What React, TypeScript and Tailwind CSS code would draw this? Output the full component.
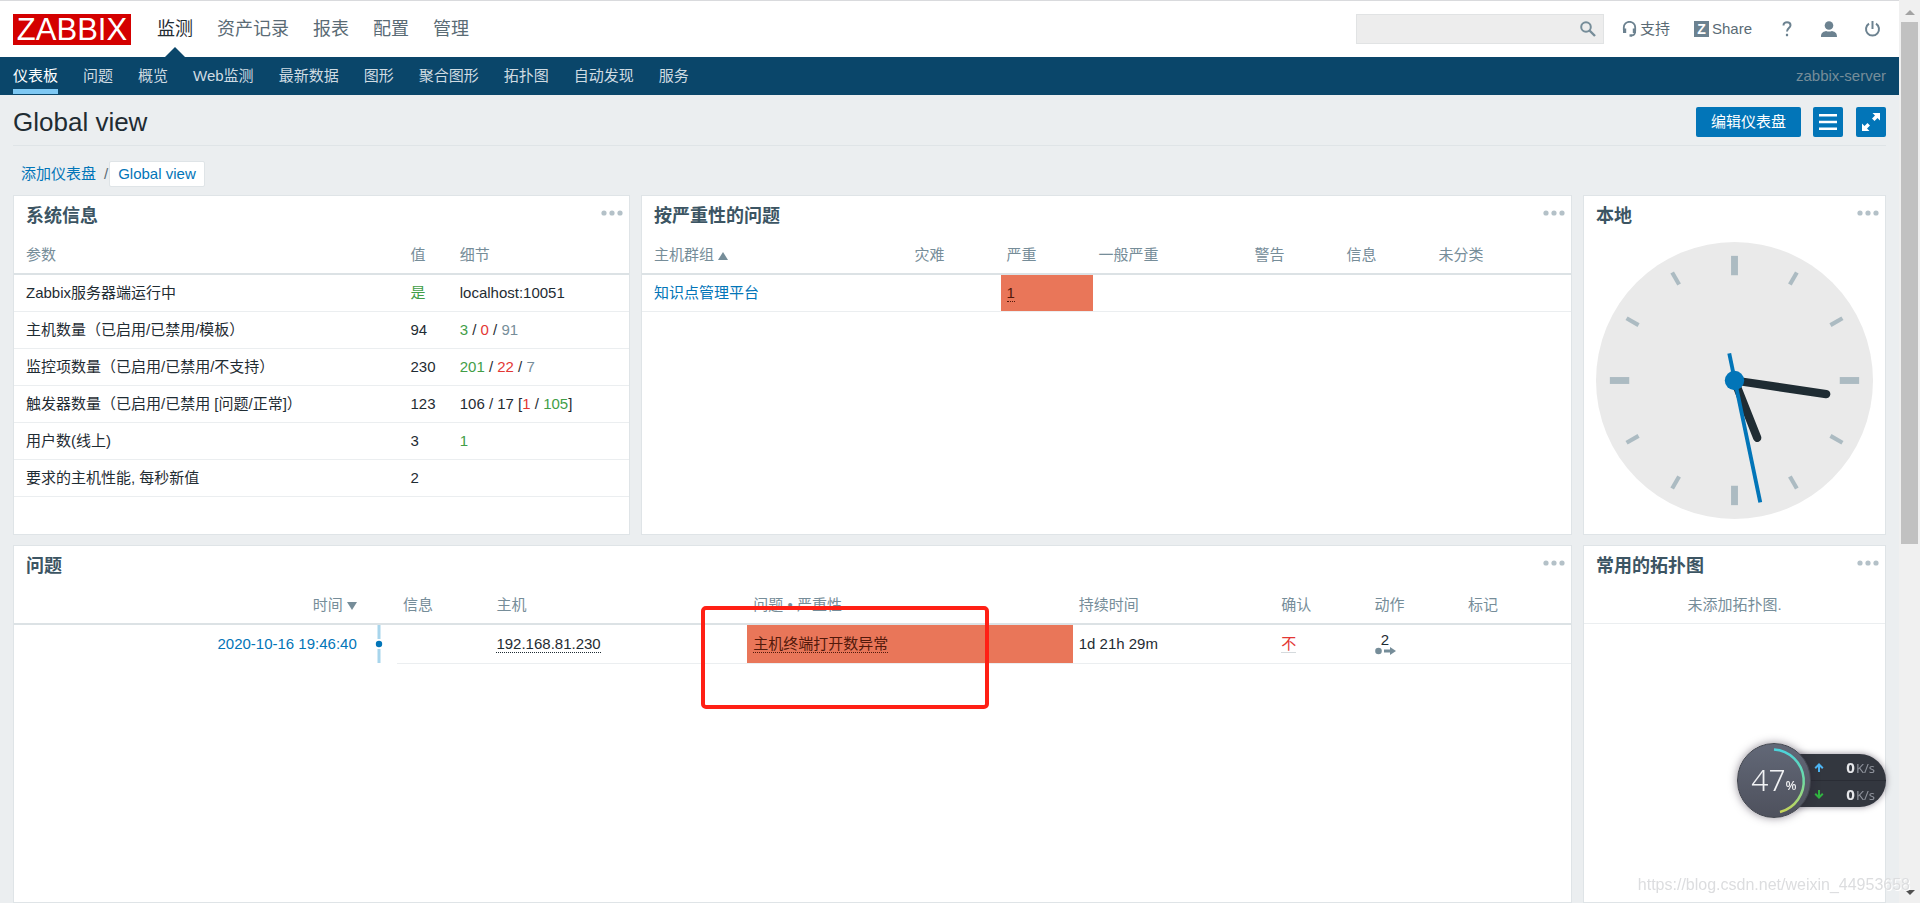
import type { ReactNode } from "react"

const mainMenu = ["监测", "资产记录", "报表", "配置", "管理"]

const subMenu = ["仪表板", "问题", "概览", "Web监测", "最新数据", "图形", "聚合图形", "拓扑图", "自动发现", "服务"]

interface SystemRow {
  name: string
  value: ReactNode
  details?: ReactNode
}

const Green = ({ children }: { children: ReactNode }) => <span className="text-[#429e47]">{children}</span>
const Red = ({ children }: { children: ReactNode }) => <span className="text-[#e33734]">{children}</span>
const Grey = ({ children }: { children: ReactNode }) => <span className="text-[#768d99]">{children}</span>

const systemRows: SystemRow[] = [
  { name: "Zabbix服务器端运行中", value: <Green>是</Green>, details: "localhost:10051" },
  {
    name: "主机数量（已启用/已禁用/模板）",
    value: "94",
    details: (
      <>
        <Green>3</Green> / <Red>0</Red> / <Grey>91</Grey>
      </>
    ),
  },
  {
    name: "监控项数量（已启用/已禁用/不支持）",
    value: "230",
    details: (
      <>
        <Green>201</Green> / <Red>22</Red> / <Grey>7</Grey>
      </>
    ),
  },
  {
    name: "触发器数量（已启用/已禁用 [问题/正常]）",
    value: "123",
    details: (
      <>
        106 / 17 [<Red>1</Red> / <Green>105</Green>]
      </>
    ),
  },
  { name: "用户数(线上)", value: "3", details: <Green>1</Green> },
  { name: "要求的主机性能, 每秒新值", value: "2" },
]

const severities = ["灾难", "严重", "一般严重", "警告", "信息", "未分类"]

function Widget({ title, className, children }: { title: string; className: string; children: ReactNode }) {
  return (
    <section className={`border border-[#dfe4e7] bg-white ${className}`}>
      <div className="flex h-10 items-center justify-between pl-3 pr-[6px]">
        <h4 className="text-[18px] font-bold leading-6 text-[#3c5563]">{title}</h4>
        <button type="button" aria-label="更多" className="pb-[6px]">
          <svg width="22" height="6" viewBox="0 0 22 6" fill="#b4c1c8">
            <circle cx="3" cy="3" r="2.6" />
            <circle cx="11" cy="3" r="2.6" />
            <circle cx="19" cy="3" r="2.6" />
          </svg>
        </button>
      </div>
      {children}
    </section>
  )
}

function Header() {
  return (
    <header>
      <div className="flex h-[57px] items-center border-t border-[#d9dadd] bg-white pl-[13px] pr-[18px]">
        <a
          href="#"
          className="flex h-[31px] w-[118px] items-center justify-center bg-[#d40000] text-[31px] leading-none text-white"
        >
          ZABBIX
        </a>
        <nav className="ml-[26px] flex h-full gap-6 text-[18px]">
          {mainMenu.map((item, i) => (
            <a
              key={item}
              href="#"
              className={`relative flex items-center ${i === 0 ? "text-[#1f2c33]" : "text-[#5a6b75]"}`}
            >
              {item}
              {i === 0 && (
                <svg className="absolute bottom-0 left-1/2 -translate-x-1/2" width="20" height="10" viewBox="0 0 20 10">
                  <path d="M0 10 10 0l10 10z" fill="#0a466a" />
                </svg>
              )}
            </a>
          ))}
        </nav>
        <div className="ml-auto flex items-center text-[#5a6b75]">
          <form className="flex h-[30px] w-[248px] items-center border border-[#e1e3e4] bg-[#ededed] pr-[7px]">
            <input type="text" aria-label="搜索" className="min-w-0 flex-1 bg-transparent px-2 outline-none" />
            <button type="button" aria-label="搜索">
              <svg width="16" height="16" viewBox="0 0 16 16" fill="none" stroke="#768d99">
                <circle cx="6" cy="6" r="4.8" strokeWidth="2" />
                <path d="m9.5 9.5 5.5 5.5" strokeWidth="2.4" />
              </svg>
            </button>
          </form>
          <a href="#" className="ml-[18px] flex items-center gap-[3px]">
            <svg width="15" height="16" viewBox="0 0 15 16" fill="none" stroke="#6c8290" strokeWidth="1.8">
              <path d="M1.800 9V6.500a5.700 5.700 0 0 1 11.400 0V10c0 2.800-1.200 4.500-3.700 4.500" />
              <path d="M2.600 7.500v4.500M12.400 7.500v4.500" strokeWidth="3.200" />
              <path d="M7.500 14.500h2.500" strokeWidth="2.400" />
            </svg>
            支持
          </a>
          <a href="#" className="ml-6 flex items-center gap-[3px]">
            <span className="flex h-[16px] w-[15px] items-center justify-center bg-[#6c8290] text-[14px] font-bold leading-none text-white">
              Z
            </span>
            Share
          </a>
          <a href="#" aria-label="帮助" className="ml-[30px]">
            <svg width="10" height="16" viewBox="0 0 10 16" fill="none" stroke="#6c8290" strokeWidth="2">
              <path d="M1.500 4.500C1.500 2.300 3 1.300 5 1.300s3.500 1.100 3.500 3c0 2.700-3.500 2.900-3.500 6.200" />
              <path d="M3.900 14h2.200" strokeWidth="2.400" />
            </svg>
          </a>
          <a href="#" aria-label="用户" className="ml-[29px]">
            <svg width="16" height="16" viewBox="0 0 16 16" fill="#6c8290">
              <circle cx="8" cy="4.500" r="4.300" />
              <path d="M0 16c0-3.500 1.200-5 5-6 2 .700 4 .700 6 0 3.800 1 5 2.500 5 6z" />
            </svg>
          </a>
          <a href="#" aria-label="退出" className="ml-[27px]">
            <svg width="17" height="16" viewBox="0 0 17 16" fill="none" stroke="#6c8290" strokeWidth="2">
              <path d="M5 2.600a6.500 6.500 0 1 0 7 0" />
              <path d="M8.500 0v8" />
            </svg>
          </a>
        </div>
      </div>
      <div className="flex h-[38px] items-stretch bg-[#0a466a] px-[13px]">
        <nav className="flex gap-[25px] text-[#cfdbe2]">
          {subMenu.map((item, i) => (
            <a
              key={item}
              href="#"
              className={`mb-px flex items-center border-b-[5px] pt-[5px] ${
                i === 0 ? "border-[#7ec8f3] text-white" : "border-transparent"
              }`}
            >
              {item}
            </a>
          ))}
        </nav>
        <span className="ml-auto self-center text-[#768d99]">zabbix-server</span>
      </div>
    </header>
  )
}

function TitleBar() {
  return (
    <div className="flex items-center border-b border-[#dfe4e7] pb-2 pt-3">
      <h1 className="pt-px text-[26px] leading-[29px]">Global view</h1>
      <button type="button" className="ml-auto h-[30px] rounded-[2px] bg-[#0275b8] px-[15px] text-white">
        编辑仪表盘
      </button>
      <button
        type="button"
        aria-label="操作"
        className="ml-3 flex h-[30px] w-[30px] items-center justify-center rounded-[2px] bg-[#0275b8]"
      >
        <svg width="18" height="16" viewBox="0 0 18 16" fill="#fff">
          <path d="M0 0h18v2.500H0zM0 6.700h18v2.500H0zM0 13.400h18v2.500H0z" />
        </svg>
      </button>
      <button
        type="button"
        aria-label="全屏"
        className="ml-[13px] flex h-[30px] w-[30px] items-center justify-center rounded-[2px] bg-[#0275b8]"
      >
        <svg width="18" height="18" viewBox="0 0 18 18" fill="#fff">
          <path d="M10.500 0H18v7.500l-2.500-2.500-3 3-2.500-2.500 3-3zM7.500 18H0v-7.500l2.500 2.500 3-3L8 12.500l-3 3z" />
        </svg>
      </button>
    </div>
  )
}

function SystemInfo() {
  return (
    <table className="w-full table-fixed text-left">
      <colgroup>
        <col className="w-[63.500%]" />
        <col className="w-[8%]" />
        <col />
      </colgroup>
      <thead>
        <tr className="h-[38px] border-b-2 border-[#dce2e5] text-[#768d99]">
          <th className="pl-3 font-normal">参数</th>
          <th className="px-[6px] font-normal">值</th>
          <th className="px-[6px] font-normal">细节</th>
        </tr>
      </thead>
      <tbody>
        {systemRows.map((row) => (
          <tr key={row.name} className="h-[37px] border-b border-[#ebeef0]">
            <td className="pl-3">{row.name}</td>
            <td className="px-[6px]">{row.value}</td>
            <td className="px-[6px]">{row.details}</td>
          </tr>
        ))}
      </tbody>
    </table>
  )
}

function ProblemsBySeverity() {
  return (
    <table className="w-full table-fixed text-left">
      <colgroup>
        <col className="w-[28.700%]" />
        <col className="w-[9.900%]" />
        <col className="w-[9.900%]" />
        <col className="w-[16.800%]" />
        <col className="w-[9.900%]" />
        <col className="w-[9.900%]" />
        <col />
      </colgroup>
      <thead>
        <tr className="h-[38px] border-b-2 border-[#dce2e5] text-[#768d99]">
          <th className="pl-3 font-normal">
            主机群组
            <svg className="ml-1 inline-block" width="10" height="8" viewBox="0 0 10 8">
              <path d="M0 8 5 0l5 8z" fill="#768d99" />
            </svg>
          </th>
          {severities.map((severity) => (
            <th key={severity} className="px-[6px] font-normal">
              {severity}
            </th>
          ))}
        </tr>
      </thead>
      <tbody>
        <tr className="h-[37px] border-b border-[#ebeef0]">
          <td className="pl-3">
            <a href="#" className="text-[#0275b8]">
              知识点管理平台
            </a>
          </td>
          {severities.map((severity) => (
            <td key={severity} className={`px-[6px] ${severity === "严重" ? "bg-[#e97659] text-[#52190b]" : ""}`}>
              {severity === "严重" && (
                <a href="#" className="border-b border-dotted border-[#52190b]">
                  1
                </a>
              )}
            </td>
          ))}
        </tr>
      </tbody>
    </table>
  )
}

const smallTicks = [30, 60, 120, 150, 210, 240, 300, 330]
const bigTicks = [0, 90, 180, 270]

function Clock() {
  return (
    <svg className="mx-auto mt-[6px] block h-[277px] w-[277px]" viewBox="0 0 100 100">
      <circle cx="50" cy="50" r="50" fill="#eaeaea" />
      {bigTicks.map((deg) => (
        <path key={deg} d="M50 5v7" stroke="#acbbc2" strokeWidth="2.5" transform={`rotate(${deg} 50 50)`} />
      ))}
      {smallTicks.map((deg) => (
        <path key={deg} d="M50 5v5" stroke="#acbbc2" strokeWidth="1.5" transform={`rotate(${deg} 50 50)`} />
      ))}
      <path d="M50 50 58.200 70.700" stroke="#1f2c33" strokeWidth="3" strokeLinecap="round" />
      <path d="M50 50 83.100 54.900" stroke="#1f2c33" strokeWidth="3" strokeLinecap="round" />
      <path d="M48.100 40.200 59.300 94" stroke="#0275b8" strokeWidth="1.4" />
      <circle cx="50" cy="50" r="3.5" fill="#0275b8" />
    </svg>
  )
}

function Problems() {
  return (
    <table className="w-full table-fixed text-left">
      <colgroup>
        <col className="w-[22.400%]" />
        <col className="w-[2.200%]" />
        <col className="w-[6%]" />
        <col className="w-[16.500%]" />
        <col className="w-[20.900%]" />
        <col className="w-[13%]" />
        <col className="w-[6%]" />
        <col className="w-[6%]" />
        <col />
      </colgroup>
      <thead>
        <tr className="h-[38px] border-b-2 border-[#dce2e5] text-[#768d99]">
          <th className="pr-[6px] text-right font-normal">
            时间
            <svg className="ml-1 inline-block" width="10" height="8" viewBox="0 0 10 8">
              <path d="M0 0 5 8l5-8z" fill="#768d99" />
            </svg>
          </th>
          <th></th>
          <th className="px-[6px] font-normal">信息</th>
          <th className="px-[6px] font-normal">主机</th>
          <th className="px-[6px] font-normal">问题 • 严重性</th>
          <th className="px-[6px] font-normal">持续时间</th>
          <th className="px-[6px] font-normal">确认</th>
          <th className="px-[6px] font-normal">动作</th>
          <th className="px-[6px] font-normal">标记</th>
        </tr>
      </thead>
      <tbody>
        <tr className="h-[38px]">
          <td className="pr-[6px] text-right">
            <a href="#" className="text-[#0275b8]">
              2020-10-16 19:46:40
            </a>
          </td>
          <td className="p-0">
            <svg className="ml-3 block" width="8" height="38" viewBox="0 0 8 38">
              <path d="M4 0v14M4 24v14" stroke="#a8d5ec" strokeWidth="3" />
              <circle cx="4" cy="19" r="3.200" fill="#0275b8" />
            </svg>
          </td>
          <td className="border-b border-[#ebeef0]"></td>
          <td className="border-b border-[#ebeef0] px-[6px]">
            <a href="#" className="border-b border-dotted border-[#1f2c33]">
              192.168.81.230
            </a>
          </td>
          <td className="relative border-b border-[#ebeef0] bg-[#e97659] bg-clip-padding px-[6px]">
            <a href="#" className="border-b border-dotted border-[#52190b] text-[#52190b]">
              主机终端打开数异常
            </a>
            <div className="absolute -left-[46px] -top-[19px] h-[103px] w-[288px] rounded-[5px] border-4 border-[#ff2015]" />
          </td>
          <td className="border-b border-[#ebeef0] px-[6px]">1d 21h 29m</td>
          <td className="border-b border-[#ebeef0] px-[6px]">
            <a href="#" className="border-b border-[#d5dadd] text-[#e33734]">
              不
            </a>
          </td>
          <td className="border-b border-[#ebeef0] px-[6px]">
            <button type="button" className="flex w-[21px] flex-col items-center">
              <span className="leading-[15px]">2</span>
              <svg width="21" height="8" viewBox="0 0 21 8" fill="#768d99">
                <circle cx="3.500" cy="4" r="3.300" />
                <path d="M9 2.400h6V0l6 4-6 4V5.600H9z" />
              </svg>
            </button>
          </td>
          <td className="border-b border-[#ebeef0]"></td>
        </tr>
      </tbody>
    </table>
  )
}

function SpeedRow({ up }: { up: boolean }) {
  return (
    <div className="flex flex-1 items-center pl-[40px] pr-[11px]">
      <svg
        width="10"
        height="9"
        viewBox="0 0 10 9"
        fill="none"
        strokeWidth="2"
        className={up ? "text-[#4db4f2]" : "rotate-180 text-[#31b441]"}
        stroke="currentColor"
      >
        <path d="M5 9V1.500M1.200 5.200 5 1.500l3.800 3.700" />
      </svg>
      <span className="ml-auto text-[15px] font-bold leading-4 text-[#e6e7ea]">0</span>
      <span className="ml-px pt-[2px] text-[13px] leading-4 text-[#8f939c]">K/s</span>
    </div>
  )
}

function MonitorBall() {
  return (
    <div className="fixed bottom-[85px] right-[34px] flex h-[75px] w-[149px] items-center font-['Noto_Sans',sans-serif]">
      <div className="ml-auto flex h-[53px] w-[112px] flex-col divide-y divide-[#2a2d35] rounded-r-full bg-[#33373f] shadow-[0_0_6px_rgba(40,30,50,0.5)]">
        <SpeedRow up />
        <SpeedRow up={false} />
      </div>
      <div className="absolute left-0 top-0 flex h-[75px] w-[74px] items-center justify-center rounded-full border border-[#43464f] bg-linear-to-b from-[#626877] to-[#4e515d] pb-[2px] shadow-[0_0_8px_rgba(40,30,50,0.5)]">
        <svg className="absolute inset-0" width="72" height="73" viewBox="0 0 72 73" fill="none">
          <defs>
            <linearGradient id="load" x1="0" y1="0" x2="0" y2="1">
              <stop offset="0" stopColor="#4bd3dc" />
              <stop offset="0.5" stopColor="#6fdba4" />
              <stop offset="1" stopColor="#c6d458" />
            </linearGradient>
          </defs>
          <path d="M36 5.500a31.800 31.800 0 0 1 6 62.500" stroke="url(#load)" strokeWidth="2.500" />
        </svg>
        <span className="text-[30px] font-light leading-none text-[#f1f2f4]">47</span>
        <span className="pt-3 text-[13px] font-medium leading-none text-[#f1f2f4]">%</span>
      </div>
    </div>
  )
}

function Scrollbar() {
  return (
    <div className="flex w-[21px] shrink-0 flex-col items-center bg-[#f0f0f0] pb-2 pt-[10px]">
      <svg width="10" height="5" viewBox="0 0 10 5">
        <path d="M0 5 5 0l5 5z" fill="#a3a3a3" />
      </svg>
      <div className="mb-auto mt-[7px] h-[59%] w-[17px] bg-[#c1c1c1]" />
      <svg width="10" height="5" viewBox="0 0 10 5">
        <path d="M0 0 5 5l5-5z" fill="#505050" />
      </svg>
    </div>
  )
}

export default function App() {
  return (
    <div className="flex h-screen overflow-hidden bg-[#ebeef0] font-['Liberation_Sans','Noto_Sans_CJK_SC',sans-serif] text-[15px] leading-5 text-[#1f2c33]">
      <div className="flex min-w-0 flex-1 flex-col">
        <Header />
        <main className="flex min-h-0 flex-1 flex-col px-[13px]">
          <TitleBar />
          <div className="mb-2 mt-[15px] flex h-[26px] items-center">
            <a href="#" className="pl-2 text-[#0275b8]">
              添加仪表盘
            </a>
            <span className="ml-2 text-[#5a6b75]">/</span>
            <a
              href="#"
              className="ml-px flex h-[26px] items-center rounded-[2px] border border-[#dfe4e7] bg-white px-2 text-[#0275b8]"
            >
              Global view
            </a>
          </div>
          <div className="grid min-h-0 flex-1 grid-cols-12 grid-rows-[340px_1fr] gap-x-[11px] gap-y-[10px]">
            <Widget title="系统信息" className="col-span-4">
              <SystemInfo />
            </Widget>
            <Widget title="按严重性的问题" className="col-span-6">
              <ProblemsBySeverity />
            </Widget>
            <Widget title="本地" className="col-span-2">
              <Clock />
            </Widget>
            <Widget title="问题" className="col-span-10">
              <Problems />
            </Widget>
            <Widget title="常用的拓扑图" className="col-span-2">
              <p className="flex h-[38px] items-center justify-center border-b border-[#ebeef0] text-[#768d99]">
                未添加拓扑图.
              </p>
            </Widget>
          </div>
        </main>
      </div>
      <Scrollbar />
      <MonitorBall />
      <div className="pointer-events-none fixed bottom-[7px] right-[10px] text-[16px] leading-[22px] text-[#dcdddf] [text-shadow:1px_1px_0_#fff]">
        https://blog.csdn.net/weixin_44953658
      </div>
    </div>
  )
}
